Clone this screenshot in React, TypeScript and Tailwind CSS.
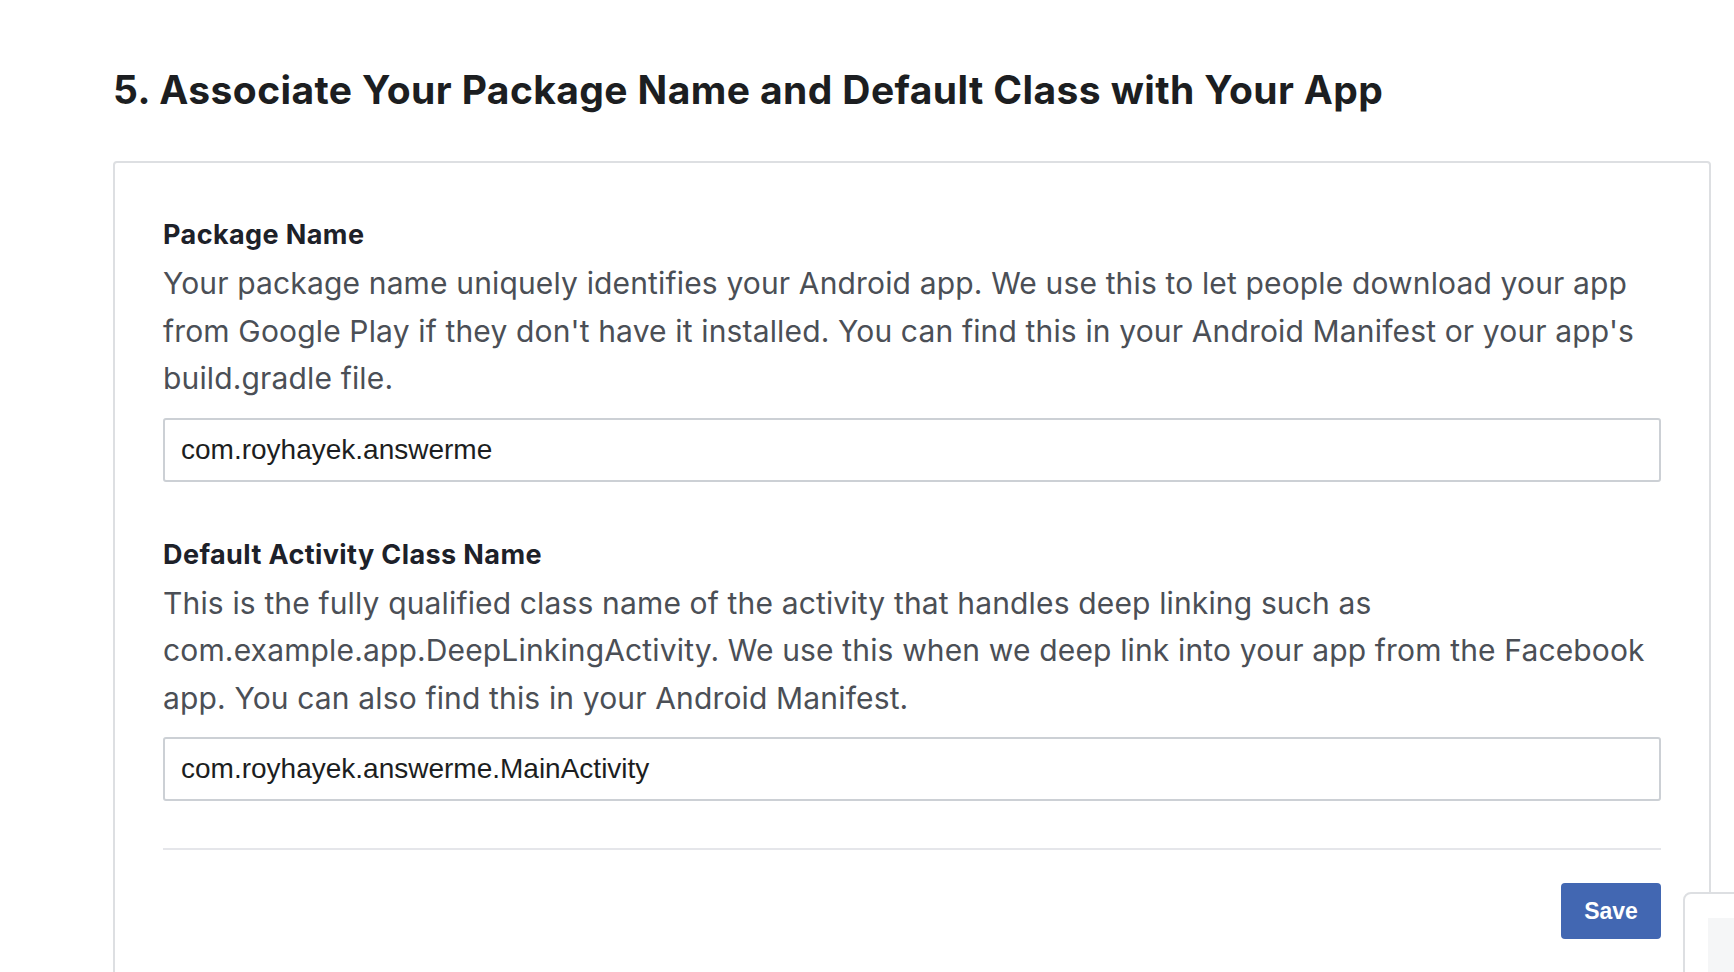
export default function App () {
	return (
		<div className="relative h-[972px] overflow-hidden bg-white font-['Inter',sans-serif]">
			<div className="pl-[113px] pr-[23px] pt-[66px]">
				<h1 className="text-[39px] leading-[48px] font-bold tracking-[0.4px] text-[#1c1e21]">
					{'5. Associate Your Package Name and Default Class with Your App'}
				</h1>

				<div className="mt-[47px] rounded-[4px] border-2 border-[#dddfe2] px-[48px] pt-[56px] pb-[120px]">
					<Field
						label="Package Name"
						help="Your package name uniquely identifies your Android app. We use this to let people download your app from Google Play if they don't have it installed. You can find this in your Android Manifest or your app's build.gradle file."
						value="com.royhayek.answerme"
					/>

					<div className="mt-[57px]">
						<Field
							label="Default Activity Class Name"
							help="This is the fully qualified class name of the activity that handles deep linking such as com.example.app.DeepLinkingActivity. We use this when we deep link into your app from the Facebook app. You can also find this in your Android Manifest."
							value="com.royhayek.answerme.MainActivity"
						/>
					</div>

					<div className="mt-[47px] h-[2px] bg-[#e5e6ea]" />

					<div className="mt-[33px] flex justify-end">
						<button className="h-[56px] w-[100px] rounded-[4px] bg-[#4267b2] font-['Liberation_Sans',Arial,sans-serif] text-[23px] font-bold text-white">
							{'Save'}
						</button>
					</div>
				</div>
			</div>

			{/* floating widget peeking in at the bottom right */}
			<div className="absolute left-[1683px] top-[892px] h-[200px] w-[120px] rounded-tl-[8px] border-2 border-[#dddfe2] bg-white pl-[23px] pt-[24px]">
				<div className="h-full w-full bg-[#f5f6f7]" />
			</div>
		</div>
	)
}

function Field ({ label, help, value }: { label: string, help: string, value: string }) {
	return (
		<div>
			<div className="text-[27px] leading-[32px] font-bold tracking-[0.4px] text-[#1d2129]">{label}</div>
			<p className="mt-[9px] text-[30px] leading-[47.5px] tracking-[0.15px] text-[#4b4f56]">{help}</p>
			<input
				readOnly
				value={value}
				className="mt-[15px] block h-[64px] w-full rounded-[3px] border-2 border-[#ccd0d5] bg-white px-[16px] font-['Liberation_Sans',Arial,sans-serif] text-[28px] text-[#1c1e21] outline-none"
			/>
		</div>
	)
}
